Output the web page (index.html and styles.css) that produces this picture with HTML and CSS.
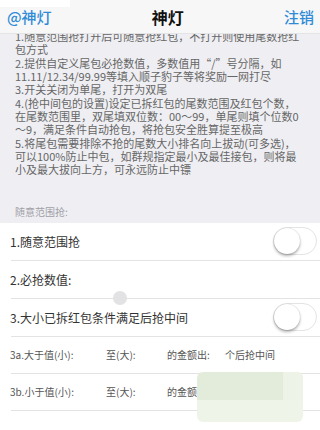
FILE: index.html
```html
<!DOCTYPE html>
<html lang="zh-CN">
<head>
<meta charset="utf-8">
<link rel="stylesheet" href="styles.css">
</head>
<body>
<div class="screen">
  <div class="corner"></div>
  <header class="nav">
    <span class="nav-link">@神灯</span>
    <span class="nav-title">神灯</span>
    <span class="nav-link">注销</span>
  </header>
  <div class="intro">
    <p>1.随意范围抢打开后可随意抢红包，不打开则使用尾数抢红</p>
    <p>包方式</p>
    <p>2.提供自定义尾包必抢数值，多数值用“/”号分隔，如</p>
    <p>11.11/12.34/99.99等填入顺子豹子等将奖励一网打尽</p>
    <p>3.开关关闭为单尾，打开为双尾</p>
    <p>4.(抢中间包的设置)设定已拆红包的尾数范围及红包个数，</p>
    <p>在尾数范围里，双尾填双位数：00～99，单尾则填个位数0</p>
    <p>～9，满足条件自动抢包，将抢包安全胜算提至极高</p>
    <p>5.将尾包需要排除不抢的尾数大小排名向上拔动(可多选)，</p>
    <p>可以100%防止中包，如群规指定最小及最佳接包，则将最</p>
    <p>小及最大拔向上方，可永远防止中镖</p>
  </div>
  <div class="section-head">随意范围抢:</div>
  <div class="list">
    <div class="row">
      <span class="label">1.随意范围抢</span>
      <span class="toggle"><span class="knob"></span></span>
    </div>
    <div class="row row-slider">
      <span class="label">2.必抢数值:</span>
      <div class="slider"><span class="thumb"></span></div>
    </div>
    <div class="row">
      <span class="label">3.大小已拆红包条件满足后抢中间</span>
      <span class="toggle"><span class="knob"></span></span>
    </div>
    <div class="row row-small">
      <span>3a.大于值(小):</span>
      <span>至(大):</span>
      <span>的金额出:</span>
      <span>个后抢中间</span>
    </div>
    <div class="row row-small">
      <span>3b.小于值(小):</span>
      <span>至(大):</span>
      <span>的金额出:</span>
      <span>个后抢中间</span>
    </div>
  </div>
  <div class="patch"><span class="patch-side"></span></div>
</div>
</body>
</html>
```
FILE: styles.css
```css
* { box-sizing: border-box; margin: 0; padding: 0; }
html, body { width: 320px; height: 430px; overflow: hidden; background: #ffffff; }
body {
  font-family: "Noto Sans CJK SC", "Noto Sans", sans-serif;
  color: #333;
}
.screen { position: relative; width: 320px; height: 430px; overflow: hidden; }

.corner {
  position: absolute;
  left: 0;
  top: 0;
  width: 70px;
  height: 7px;
  background: #ffffff;
  z-index: 3;
}

.nav {
  position: relative;
  z-index: 2;
  height: 34px;
  display: flex;
  align-items: center;
  justify-content: space-between;
  padding: 0 6px 0 7px;
  background: #f7f7f8;
  border-bottom: 1px solid #e4e4e6;
}
.nav-link { font-size: 15px; color: #2f8bd6; font-weight: 500; }
.nav-title { font-size: 16px; color: #111; font-weight: 700; }

.intro {
  margin-top: -4px;
  background: #efeff3;
  padding: 0 6px 0 15px;
  font-size: 11px;
  line-height: 13.35px;
  color: #666;
  white-space: nowrap;
}
.intro p { height: 13.35px; }
.section-head {
  background: #efeff3;
  padding: 28px 0 4px 15px;
  font-size: 10px;
  line-height: 14px;
  color: #a0a0a6;
}

.list { background: #fff; }
.row {
  margin-left: 11px;
  height: 38px;
  padding-right: 3px;
  display: flex;
  align-items: center;
  justify-content: space-between;
  border-bottom: 1px solid #e3e3e5;
}
.label { font-size: 12px; color: #333; margin-left: -1px; }

.toggle {
  display: flex;
  width: 44px;
  height: 28px;
  border: 1.5px solid #e4e4e6;
  border-radius: 14px;
  background: #fff;
  align-items: center;
}
.knob {
  width: 26px;
  height: 26px;
  border-radius: 50%;
  background: #fff;
  box-shadow: 0 2px 3px rgba(0,0,0,0.3), 0 0 1px rgba(0,0,0,0.25);
}

.row-slider {
  flex-direction: column;
  align-items: stretch;
  justify-content: flex-end;
  border-bottom: none;
  padding-right: 0;
}
.row-slider .label { flex: 1; display: flex; align-items: center; }
.slider {
  position: relative;
  height: 1px;
  background: #e3e3e5;
}
.thumb {
  position: absolute;
  left: 102px;
  top: -7px;
  width: 14px;
  height: 14px;
  border-radius: 50%;
  background: #e2e2e4;
}

.row-small {
  display: grid;
  grid-template-columns: 96px 61px 58px 1fr;
  font-size: 10px;
  color: #555;
  height: 37px;
}
.row-small span { margin-left: -1px; }

.patch {
  position: absolute;
  left: 197px;
  top: 372px;
  width: 106px;
  height: 50px;
  border-radius: 6px;
  background: linear-gradient(#e3ecda 0, #e3ecda 56%, #eef5e8 56%, #eef5e8 100%);
}
.patch-side {
  position: absolute;
  right: 0;
  top: 0;
  width: 20px;
  height: 28px;
  border-radius: 0 6px 0 0;
  background: #edf4e7;
}
```
